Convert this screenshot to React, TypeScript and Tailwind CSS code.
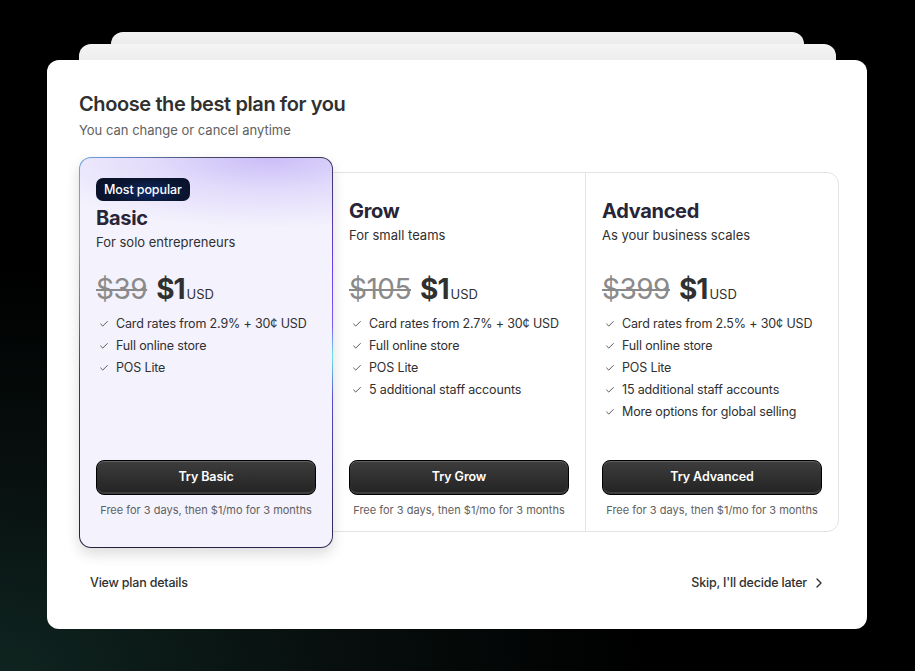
import React from 'react';
import { Check, ChevronRight } from 'lucide-react';

interface Plan {
  name: string;
  tagline: string;
  oldPrice: string;
  features: string[];
  cta: string;
  popular?: boolean;
}

const PLANS: Plan[] = [
  {
    name: 'Basic',
    tagline: 'For solo entrepreneurs',
    oldPrice: '$39',
    features: ['Card rates from 2.9% + 30¢ USD', 'Full online store', 'POS Lite'],
    cta: 'Try Basic',
    popular: true,
  },
  {
    name: 'Grow',
    tagline: 'For small teams',
    oldPrice: '$105',
    features: ['Card rates from 2.7% + 30¢ USD', 'Full online store', 'POS Lite', '5 additional staff accounts'],
    cta: 'Try Grow',
  },
  {
    name: 'Advanced',
    tagline: 'As your business scales',
    oldPrice: '$399',
    features: [
      'Card rates from 2.5% + 30¢ USD',
      'Full online store',
      'POS Lite',
      '15 additional staff accounts',
      'More options for global selling',
    ],
    cta: 'Try Advanced',
  },
];

function PlanBody({ plan }: { plan: Plan }) {
  return (
    <>
      <div className="mt-[26px] flex items-baseline h-[36px] leading-[36px]">
        <span className="text-[28px] text-[#8a8a8a] line-through decoration-[2px] tracking-[-0.5px]">{plan.oldPrice}</span>
        <span className="ml-[9px] text-[28px] font-bold text-[#303030] tracking-[-1px]">$1</span>
        <span className="ml-[2px] text-[13px] text-[#303030]">USD</span>
      </div>
      <ul className="mt-[6px] flex-1">
        {plan.features.map(f => (
          <li key={f} className="flex items-center h-[22px] text-[12.5px] tracking-[-0.15px] text-[#303030]">
            <Check className="h-[10px] w-[10px] ml-[3px] mr-[7px] text-[#4a4a4a]" strokeWidth={2.2} />
            {f}
          </li>
        ))}
      </ul>
      <button className="h-[35px] w-full rounded-[8px] border border-black bg-gradient-to-b from-[#3d3d3d] to-[#232323] text-[12.5px] tracking-[-0.1px] font-semibold text-white shadow-[inset_0_1px_0_rgba(255,255,255,0.18),inset_0_-2px_0_rgba(255,255,255,0.12)]">
        {plan.cta}
      </button>
      <p className="mt-[7px] h-[16px] leading-[16px] text-center text-[11px] text-[#616161]">Free for 3 days, then $1/mo for 3 months</p>
    </>
  );
}

export default function App() {
  const [basic, grow, advanced] = PLANS;

  return (
    <div
      className="min-h-[671px] w-full pt-[32px] font-['Inter','Liberation_Sans',sans-serif]"
      style={{ background: 'radial-gradient(ellipse 70% 60% at 0% 100%, #0f2420 0%, #070e0d 55%, #000 100%)' }}
    >
      {/* stacked cards behind */}
      <div className="relative mx-[111px] h-[20px] rounded-t-[12px] bg-gradient-to-b from-[#f3f3f3] to-[#e6e6e6]" />
      <div className="relative -mt-[8px] mx-[79px] h-[24px] rounded-t-[12px] bg-gradient-to-b from-[#f5f5f5] to-[#e9e9e9]" />

      {/* main card */}
      <div className="relative -mt-[8px] ml-[47px] w-[820px] h-[569px] rounded-[12px] bg-white pl-[32px] pr-[28px] pt-[30px]">
        <h1 className="text-[20px] leading-[28px] font-semibold text-[#303030] tracking-[-0.4px]">Choose the best plan for you</h1>
        <p className="mt-[2px] text-[13px] leading-[20px] text-[#616161]">You can change or cancel anytime</p>

        <div className="mt-[32px] flex h-[360px] rounded-[12px] border border-[#e3e3e3]">
          {/* Basic, highlighted */}
          <div
            className="relative z-10 -ml-px -mt-[16px] -mb-[17px] w-[254px] rounded-[12px] p-px shadow-[0_6px_14px_rgba(0,0,0,0.14)]"
            style={{
              background:
                'conic-gradient(from 0deg, #4b4668 0deg, #3a3550 30deg, #6d3df0 55deg, #7c5cf5 78deg, #6ee7e7 92deg, #5a4bd0 110deg, #2a2850 150deg, #1e1d3a 200deg, #3b3d5a 260deg, #4fc0c8 312deg, #6c9be0 330deg, #4b4668 360deg)',
            }}
          >
            <div
              className="flex h-full flex-col rounded-[11px] px-[16px] pt-[20px] pb-[29px]"
              style={{
                background:
                  'radial-gradient(ellipse 100% 70px at 75% 0%, #cabdf7 0%, rgba(218,209,250,0.7) 45%, rgba(244,242,253,0) 100%), #f4f2fd',
              }}
            >
              <span
                className="self-start h-[23px] rounded-[7px] px-[8px] text-[12.5px] tracking-[-0.1px] leading-[23px] font-medium text-white"
                style={{ background: 'radial-gradient(ellipse 60% 90% at 55% 60%, #0d2a6b 0%, #0b1632 60%, #0a1128 100%)' }}
              >
                Most popular
              </span>
              <h2 className="mt-[3px] text-[20px] leading-[28px] font-bold tracking-[-0.3px] text-[#272537]">{basic.name}</h2>
              <p className="text-[13px] leading-[20px] text-[#303030]">{basic.tagline}</p>
              <div className="-mt-[7px] flex flex-1 flex-col">
                <PlanBody plan={basic} />
              </div>
            </div>
          </div>

          {/* Grow */}
          <div className="flex flex-1 flex-col px-[16px] pt-[24px] pb-[13px]">
            <h2 className="text-[20px] leading-[28px] font-bold tracking-[-0.3px] text-[#272537]">{grow.name}</h2>
            <p className="text-[13px] leading-[20px] text-[#303030]">{grow.tagline}</p>
            <PlanBody plan={grow} />
          </div>

          {/* Advanced */}
          <div className="flex flex-1 flex-col border-l border-[#e3e3e3] px-[16px] pt-[24px] pb-[13px]">
            <h2 className="text-[20px] leading-[28px] font-bold tracking-[-0.3px] text-[#272537]">{advanced.name}</h2>
            <p className="text-[13px] leading-[20px] text-[#303030]">{advanced.tagline}</p>
            <PlanBody plan={advanced} />
          </div>
        </div>

        <div className="mt-[35px] flex items-center justify-between">
          <button className="h-[32px] rounded-[8px] px-[11px] text-[12.5px] tracking-[-0.2px] font-medium text-[#303030]">View plan details</button>
          <button className="flex h-[32px] items-center rounded-[8px] pl-[12px] pr-[12px] text-[12.5px] tracking-[-0.2px] font-medium text-[#303030]">
            Skip, I'll decide later
            <ChevronRight className="ml-[4px] h-[16px] w-[16px]" strokeWidth={2} />
          </button>
        </div>
      </div>
    </div>
  );
}
